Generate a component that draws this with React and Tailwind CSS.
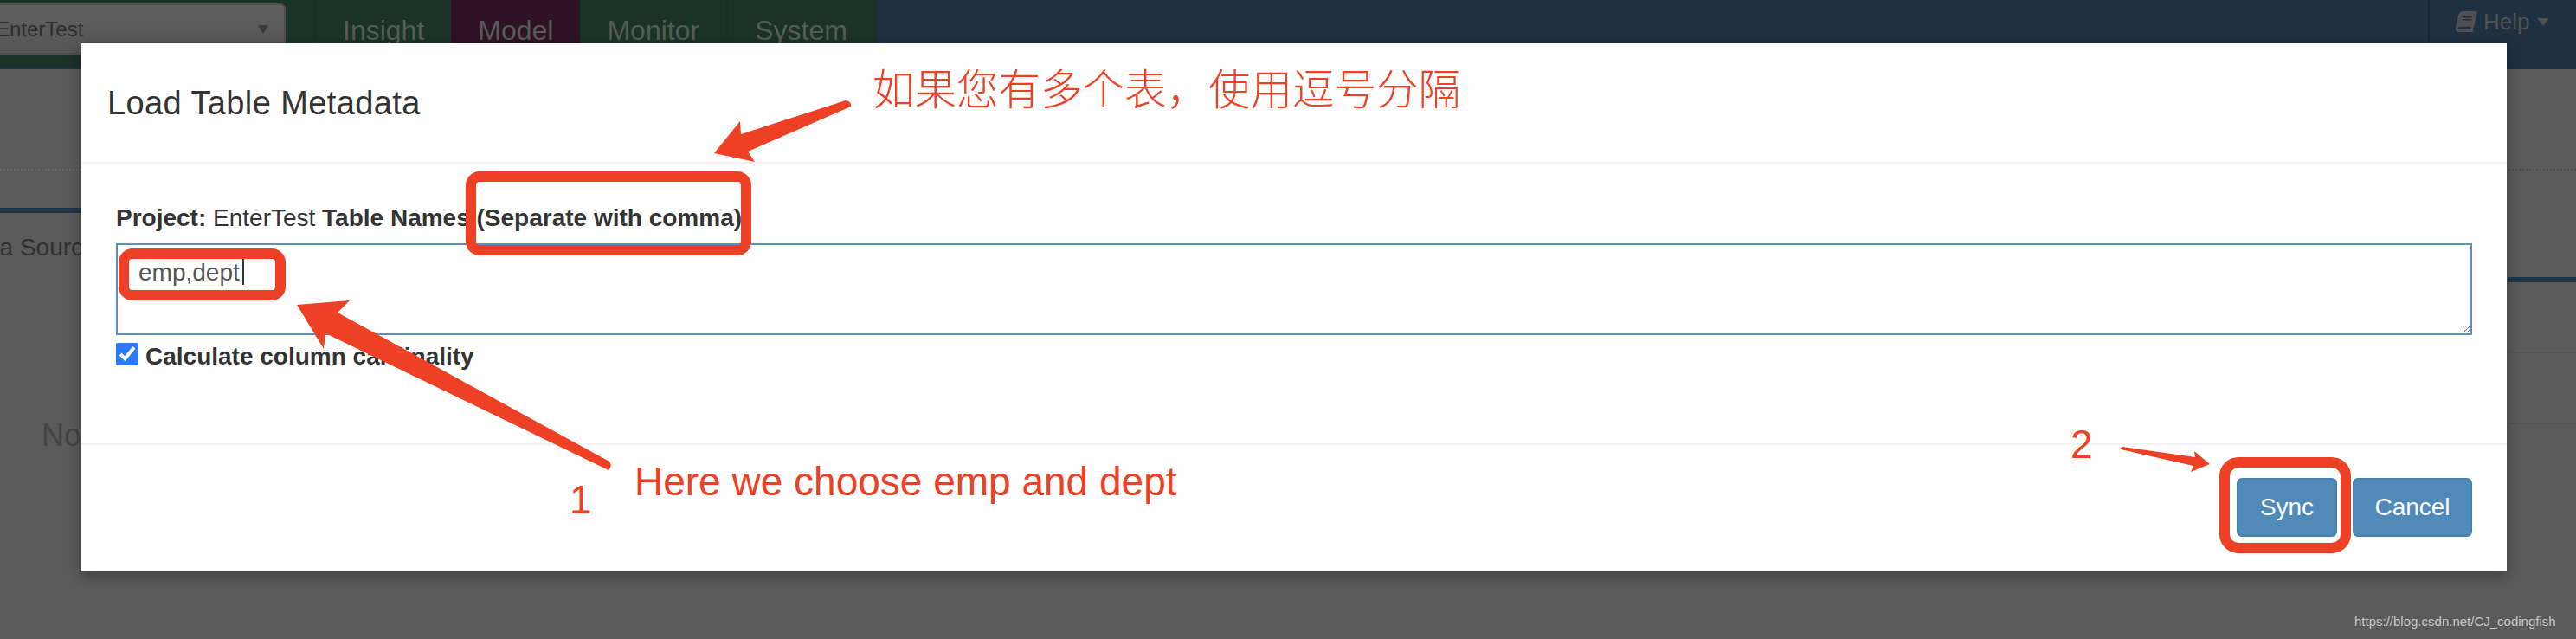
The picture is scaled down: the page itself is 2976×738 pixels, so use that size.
// Load Table Metadata dialog, with the red annotations drawn over it
import { FaBook } from 'react-icons/fa'

const NAV_TABS = [
  { label: 'Insight', className: 'border-l-2 border-[#183024]' },
  { label: 'Model', className: 'bg-[#2f1226]' },
  { label: 'Monitor', className: '' },
  { label: 'System', className: 'border-l-2 border-[#183024]' },
]

const RED_BOXES = [
  'left-[538px] top-[198px] h-[97px] w-[330px] rounded-[16px]',
  'left-[137px] top-[287px] h-[60px] w-[193px] rounded-[16px]',
  'left-[2564px] top-[528px] h-[111px] w-[152px] rounded-[22px]',
]

function TopNav() {
  return (
    <div className="flex h-[80px] bg-[#1f3041]">
      <div className="flex h-[78px] w-[1014px] bg-[#1b3226]">
        <div className="mt-[4px] flex h-[59px] w-[330px] items-center justify-between rounded-r-[6px] border-2 border-l-0 border-[#4e4e4e] bg-gradient-to-b from-[#606060] to-[#555555] pr-[18px]">
          <span className="ml-[-5px] text-[24px] text-[#2d2d2d]">EnterTest</span>
          <span className="h-0 w-0 border-x-[6px] border-t-[10px] border-x-transparent border-t-[#3a3a3a]" />
        </div>
        <div className="ml-[33px] flex">
          {NAV_TABS.map((tab) => (
            <div key={tab.label} className={`h-[78px] px-[31px] pt-[16px] text-[32px] leading-[38px] text-[#555b57] ${tab.className}`}>
              {tab.label}
            </div>
          ))}
        </div>
      </div>
      <div className="ml-auto flex h-[50px] w-[171px] items-center border-l-2 border-[#1a2836] pl-[31px] text-[#505050]">
        <FaBook className="h-[24px] w-[22px] -skew-x-12" />
        <span className="ml-[9px] text-[26px]">Help</span>
        <span className="ml-[9px] h-0 w-0 border-x-[7px] border-t-[9px] border-x-transparent border-t-[#505050]" />
      </div>
    </div>
  )
}

function PageBehind() {
  return (
    <div className="flex justify-between">
      {/* left strip still showing next to the dialog */}
      <div className="w-[94px] overflow-hidden">
        <div className="mt-[115px] border-t-2 border-dotted border-[#666666]" />
        <div className="mt-[43px] h-[6px] bg-[#1f3346]" />
        <div className="ml-[-44px] mt-[24px] w-[200px] text-[28px] leading-[32px] text-[#303030]">Data Source</div>
        <div className="ml-[48px] mt-[181px] w-[100px] text-[36px] leading-[40px] text-[#444444]">No</div>
      </div>
      {/* right strip */}
      <div className="w-[78px] overflow-hidden">
        <div className="mt-[115px] border-t-2 border-dotted border-[#4c4c4c]" />
        <div className="mt-[123px] h-[6px] bg-[#1f3346]" />
        <div className="mt-[81px] h-[1px] bg-[#545454]" />
        <div className="mt-[80px] h-[2px] bg-[#505050]" />
      </div>
    </div>
  )
}

function Modal() {
  return (
    <div className="absolute left-[94px] top-[50px] flex h-[610px] w-[2802px] flex-col bg-white text-[#333333] shadow-[0_5px_15px_rgba(0,0,0,0.3)]">
      <div className="flex h-[139px] items-center border-b-2 border-[#f2f2f2] px-[30px]">
        <h4 className="text-[38px] leading-[40px] tracking-[0.4px]">Load Table Metadata</h4>
      </div>
      <div className="flex-1 px-[40px] pt-[47px]">
        <div className="text-[28px] leading-[32px]">
          <b>Project:</b> EnterTest <b>Table Names (Separate with comma)</b>
        </div>
        <div className="relative mt-[13px] flex">
          <textarea
            readOnly
            value="emp,dept"
            className="h-[106px] w-full resize-y border-2 border-[#5a90bf] px-[24px] pt-[12px] text-[28px] leading-[40px] text-[#555555] outline-none"
          />
          <span className="absolute left-[146px] top-[18px] h-[30px] w-[2px] bg-[#333333]" />
        </div>
        <label className="mt-[9px] flex items-start gap-[8px] text-[28px] font-bold leading-[32px]">
          <input type="checkbox" checked readOnly className="m-0 h-[26px] w-[26px] accent-[#2c7bf6]" />
          Calculate column cardinality
        </label>
      </div>
      <div className="flex h-[148px] justify-end gap-[18px] border-t-2 border-[#f2f2f2] px-[40px] pt-[38px]">
        <button className="h-[68px] w-[116px] rounded-[6px] border-2 border-[#4a80ad] bg-[#4f8ab9] text-[28px] text-white">Sync</button>
        <button className="h-[68px] w-[138px] rounded-[6px] border-2 border-[#4a80ad] bg-[#4f8ab9] text-[28px] text-white">Cancel</button>
      </div>
    </div>
  )
}

function Annotations() {
  return (
    <>
      {RED_BOXES.map((box) => (
        <div key={box} className={`absolute border-[12px] border-[#ee4024] ${box}`} />
      ))}
      <svg className="absolute left-0 top-0 h-[738px] w-[2976px]" viewBox="0 0 2976 738" fill="#ee4024">
        <path d="M343 352 L404 347 L390 361 L704 533 Q708 538 703 543 L376 385 L374 403 Z" />
        <path d="M825 177 L855 140 L856 155 L977 116 Q984 117 983 123 L864 175 L872 187 Z" />
        <path d="M2553 536 L2535 521 L2536 528 L2452 516 Q2449 517 2450 519 L2534 538 L2531 545 Z" />
      </svg>
      <span className="absolute left-[1008px] top-[65px] whitespace-nowrap font-['Noto_Sans_CJK_SC',sans-serif] text-[48.5px] font-light leading-[70px] text-[#ee4024]">
        如果您有多个表，使用逗号分隔
      </span>
      <span className="absolute left-[733px] top-[530px] whitespace-nowrap text-[46px] leading-[52px] text-[#ee4024]">
        Here we choose emp and dept
      </span>
      <span className="absolute left-[658px] top-[551px] text-[46px] leading-[52px] text-[#ee4024]">1</span>
      <span className="absolute left-[2392px] top-[487px] text-[46px] leading-[52px] text-[#ee4024]">2</span>
      <span className="absolute left-[2720px] top-[709px] whitespace-nowrap text-[15px] leading-[18px] text-[#c8c8c8]">
        https://blog.csdn.net/CJ_codingfish
      </span>
    </>
  )
}

export default function App() {
  return (
    <div className="relative h-[738px] w-[2976px] overflow-hidden bg-[#5a5a5a] font-['Liberation_Sans',Arial,sans-serif]">
      <TopNav />
      <PageBehind />
      <Modal />
      <Annotations />
    </div>
  )
}
